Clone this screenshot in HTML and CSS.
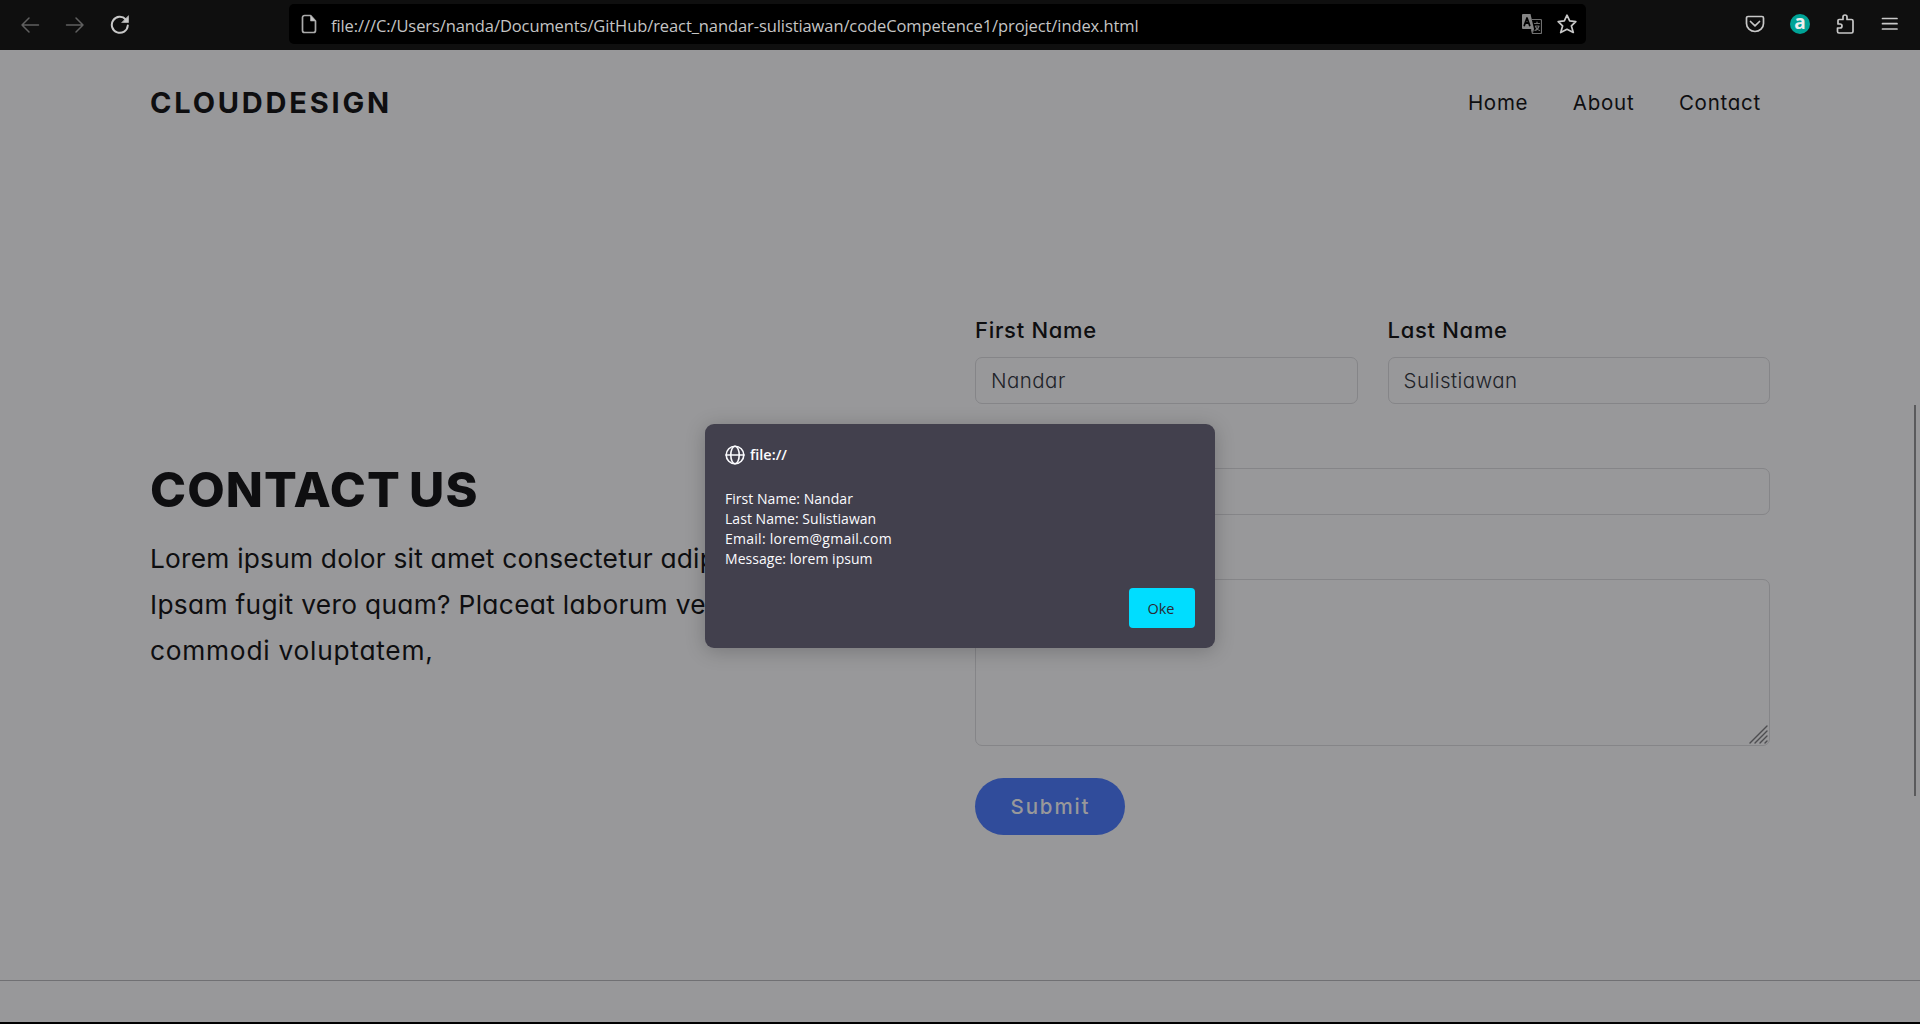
FILE: index.html
```
<!DOCTYPE html>
<html lang="en">
<head>
<meta charset="utf-8">
<title>Contact Us</title>
<link rel="stylesheet" href="styles.css">
</head>
<body>
<header class="toolbar">
  <div class="history">
    <svg class="dim" width="20" height="20" viewBox="0 0 20 20"><path d="M18.5 10H2M9 3 2 10l7 7"/></svg>
    <svg class="dim" width="20" height="20" viewBox="0 0 20 20"><path d="M1.500 10H18M11 3l7 7-7 7"/></svg>
    <svg class="reload" width="20" height="20" viewBox="0 0 20 20"><path d="M17.800 10.500A8 8 0 1 1 15.800 4.500"/><path class="solid" d="M18.500 1v6.500H12z"/></svg>
  </div>
  <div class="address">
    <svg class="page" width="18" height="20" viewBox="0 0 18 20"><path d="M10.500 1.500H4.500a2 2 0 0 0-2 2v13a2 2 0 0 0 2 2h9a2 2 0 0 0 2-2V7z"/><path class="solid" d="M10.500 1.500V7h5z"/></svg>
    <span class="url">file:///C:/Users/nanda/Documents/GitHub/react_nandar-sulistiawan/codeCompetence1/project/index.html</span>
    <svg class="translate" width="20" height="20" viewBox="0 0 20 20"><path class="front" d="M1 0h7.500l3.500 15H1a1 1 0 0 1-1-1V1a1 1 0 0 1 1-1z"/><path class="front" d="M9 15h3l-1 4z"/><path class="back" d="M10 5.500h8.500a1 1 0 0 1 1 1v12a1 1 0 0 1-1 1H10.500L9.500 16M12.500 9.500h5M15 8v1.500M13.500 12h3.500q-1 3.500-4 4.500M13.500 12.500q1 3 4 4"/><path class="letter" d="M2.300 11.500 5 4l2.700 7.500M3.300 9h3.400"/></svg>
    <svg class="star" width="20" height="20" viewBox="0 0 20 20"><path d="m10 1.200 2.700 5.600 6.100.8-4.400 4.300 1.900 6.600-6.300-3.200-6.300 3.200 1.900-6.600L1.200 7.600l6.100-.8z"/></svg>
  </div>
  <div class="tools">
    <svg width="20" height="20" viewBox="0 0 20 20"><path d="M3 2.500h14a1.500 1.500 0 0 1 1.500 1.500v5.500a8.500 8 0 0 1-17 0V4A1.500 1.500 0 0 1 3 2.500z"/><path d="m5.500 7.500 4.500 4.300 4.500-4.300"/></svg>
    <span class="extension">a</span>
    <svg width="20" height="20" viewBox="0 0 20 20"><path d="M3 6.500a1 1 0 0 1 1-1H8V3a2 2 0 0 1 4 0v2.500h4.500A1.500 1.500 0 0 1 18 7v10.500a1.500 1.500 0 0 1-1.500 1.500H4a1.500 1.500 0 0 1-1.500-1.500V14H5a2 2 0 0 0 0-4H3z"/></svg>
    <svg width="20" height="20" viewBox="0 0 20 20"><path d="M2.500 4.500H17M2.500 9.700H17M2.500 15H17"/></svg>
  </div>
</header>

<div class="view">
  <nav class="navbar">
    <a class="brand">CLOUDDESIGN</a>
    <div class="links"><a>Home</a><a>About</a><a>Contact</a></div>
  </nav>

  <main class="contact">
    <div class="intro">
      <h1>CONTACT US</h1>
      <p>Lorem ipsum dolor sit amet consectetur adip<br><span class="open">Ipsam fugit vero quam? Placeat laborum ve</span><br><span class="loose">commodi voluptatem,</span></p>
    </div>
    <form class="form">
      <div class="pair">
        <label>First Name<span class="field">Nandar</span></label>
        <label>Last Name<span class="field">Sulistiawan</span></label>
      </div>
      <label>Email<span class="field"></span></label>
      <label>Message<span class="field area"><svg width="20" height="20" viewBox="0 0 20 20"><path d="M1 18 18 1M6 18 18 6M11 18l7-7M16 18l2-2"/></svg></span></label>
      <button class="submit" type="button">Submit</button>
    </form>
  </main>
  <footer class="footer"></footer>
  <i class="thumb"></i>

  <section class="dialog" role="dialog">
    <div class="origin">
      <svg width="20" height="20" viewBox="0 0 20 20"><circle cx="10" cy="10" r="8.800"/><ellipse cx="10" cy="10" rx="4.200" ry="8.800"/><path d="M1 10h18"/></svg>
      <span>file://</span>
    </div>
    <p>First Name: Nandar<br>Last Name: Sulistiawan<br><span class="mail">Email: lorem@gmail.com</span><br>Message: lorem ipsum</p>
    <button class="ok" type="button">Oke</button>
  </section>
</div>
</body>
</html>
```
FILE: styles.css
```
* { box-sizing: border-box; }
body {
  margin: 0;
  height: 1024px;
  overflow: hidden;
  display: flex;
  flex-direction: column;
  background: #98989a;
  color: #0e0e10;
  font-family: Inter, sans-serif;
  font-feature-settings: "cv11";
}
svg { display: block; flex: none; fill: none; stroke: #c8c8c8; stroke-width: 1.7; stroke-linecap: round; stroke-linejoin: round; }
.solid { fill: #c8c8c8; stroke-width: .6; }

.toolbar { flex: none; height: 50px; display: flex; align-items: flex-start; background: #0f0f0f; }
.history { width: 289px; height: 50px; padding-left: 20px; display: flex; align-items: center; gap: 25px; }
.dim { stroke: #606060; stroke-width: 1.5; }
.reload { stroke-width: 2; }
.address {
  width: 1297px; height: 40px; margin-top: 4px; padding: 0 9px 0 11px;
  display: flex; align-items: center; background: #000; border-radius: 5px;
}
.page { margin-right: 13px; stroke: #aaa; }
.url {
  flex: 1; padding-top: 3px; white-space: nowrap; color: #c5c5c5;
  font: 16.5px/24px "Open Sans", sans-serif; letter-spacing: -.09px;
}
.translate { margin-right: 15px; stroke: #707070; stroke-width: 1.2; }
.front { fill: #858585; stroke: none; }
.letter { stroke: #000; stroke-width: 1.8; }
.tools { height: 48px; margin-left: 159px; display: flex; align-items: center; gap: 25px; }
.extension {
  width: 20px; height: 20px; border-radius: 50%; background: #00a396; color: #eee;
  font: 700 19px/16px "Open Sans", sans-serif; text-align: center;
}

.view { flex: 1; display: flex; flex-direction: column; position: relative; border-bottom: 2px solid #000; }
.navbar { height: 105px; padding: 0 159px 0 150px; display: flex; align-items: center; justify-content: space-between; }
.brand { font-size: 29px; font-weight: 700; letter-spacing: 2.8px; }
.links { display: flex; gap: 44.500px; font-size: 20.5px; font-weight: 400; letter-spacing: .75px; }

.contact { height: 825px; padding: 0 150px; display: grid; grid-template-columns: 1fr 1fr; gap: 30px; }
.intro { align-self: center; white-space: nowrap; }
h1 { margin: 0 0 17px; font-size: 48.5px; font-weight: 800; line-height: 58px; letter-spacing: 1.1px; word-spacing: -3.5px; }
.intro p { margin: 0; font-size: 26.3px; line-height: 46px; letter-spacing: .22px; }
.intro .open { letter-spacing: .32px; }
.intro .loose { letter-spacing: .75px; }

.form { padding-top: 159px; display: flex; flex-direction: column; gap: 21px; }
.pair { display: grid; grid-template-columns: 1fr 1fr; gap: 30px; }
label { font-size: 22px; font-weight: 500; line-height: 33px; letter-spacing: .7px; }
.field {
  display: block; height: 47px; margin-top: 10px; padding: 0 15px;
  border: 1px solid #858588; border-radius: 7px;
  font-size: 20.5px; font-weight: 300; line-height: 46px; letter-spacing: .45px; color: #202228;
}
.area { height: 167px; padding: 0; display: flex; align-items: flex-end; justify-content: flex-end; }
.area svg { stroke: #4d4d50; stroke-width: 1.4; }
.submit {
  width: 150px; height: 57px; margin-top: 11px; padding: 0 0 1px; border: 0; border-radius: 29px;
  background: #304c9b; color: #98989a; font: 500 20.500px Inter, sans-serif; letter-spacing: 1.9px; text-indent: 1px;
}
.footer { flex: 1; border-top: 1px solid #707073; }
.thumb { position: absolute; left: 1914px; top: 355px; width: 2px; height: 391px; background: #5a5a5c; }

.dialog {
  position: absolute; left: 705px; top: 374px; width: 510px; height: 224px; padding: 21px 20px 20px;
  display: flex; flex-direction: column; border-radius: 9px; background: #42404d; color: #fbfbfe;
  box-shadow: 0 3px 20px rgba(0, 0, 0, .22); font: 14px/20px "Open Sans", sans-serif;
}
.origin { display: flex; align-items: center; gap: 5px; font-weight: 600; font-size: 14.5px; }
.origin svg { stroke: #fbfbfe; stroke-width: 1.6; }
.dialog p { margin: 24px 0 19px; letter-spacing: .04px; }
.dialog .mail { letter-spacing: .26px; }
.ok {
  align-self: flex-end; width: 66px; height: 40px; padding: 0 2px 0 0; border: 0; border-radius: 4px;
  background: #00ddff; color: #2b2a33; font: 14.500px "Open Sans", sans-serif;
}
```
